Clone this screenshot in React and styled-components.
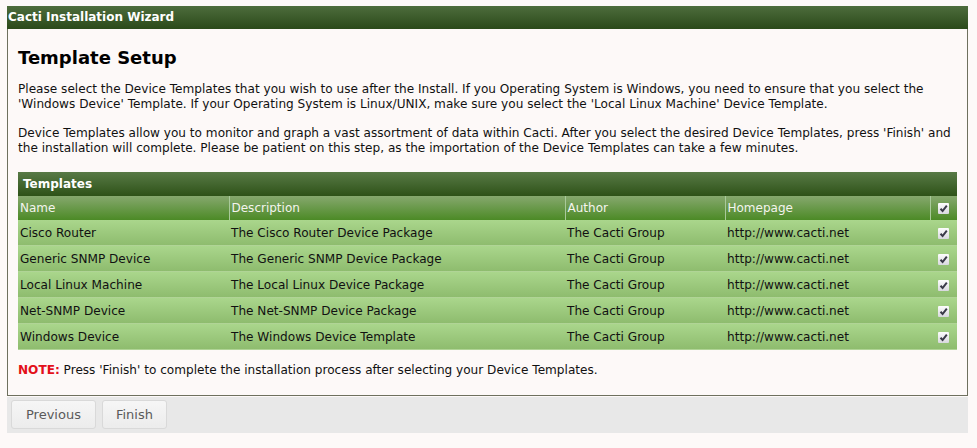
import React from "react";
import styled, { createGlobalStyle } from "styled-components";

const Global = createGlobalStyle`
  html, body { margin: 0; padding: 0; background: #fdf9f8; }
  body { font-family: "DejaVu Sans", Verdana, sans-serif; font-size: 12.1px; color: #111; }
`;

const Page = styled.div`
  padding: 6px 9px 0 7px;
  width: 961px;
`;

const Panel = styled.div`
  border: 1px solid #6e705e;
  border-top: none;
  background: #fdf9f8;
`;

const TitleBar = styled.div`
  height: 23px;
  line-height: 23px;
  margin: 0 -1px;
  padding-left: 1px;
  background: linear-gradient(#4d6c3c, #2b4a1a);
  color: #fff;
  font-weight: bold;
  font-size: 12px;
`;

const Content = styled.div`
  padding: 18px 10px 17px 10px;
`;

const Heading = styled.h2`
  margin: 0 0 13px 0;
  font-size: 18px;
  line-height: 22px;
  font-weight: bold;
  color: #000;
`;

const Para = styled.p`
  margin: 0 0 14px 0;
  line-height: 15px;
  color: #111;
`;

const Table = styled.table`
  width: 100%;
  border-collapse: collapse;
  margin-top: 16px;
`;

const CaptionRow = styled.tr`
  background: linear-gradient(#587a46, #2e5218);
  th {
    height: 24px;
    padding: 0 5px;
    color: #fff;
    font-weight: bold;
    font-size: 12px;
    text-align: left;
  }
`;

const HeadRow = styled.tr`
  background: linear-gradient(#86a86e, #4c8a26);
  th {
    height: 24px;
    padding: 0 2px;
    color: #f4f4ee;
    font-weight: normal;
    font-size: 12px;
    text-align: left;
    border-left: 1px solid #a9c99a;
  }
  th:first-child { border-left: none; }
`;

const Row = styled.tr`
  background: linear-gradient(#aad68c, #8dbb6d);
  td {
    height: 25px;
    padding: 0 2px;
    color: #111;
    border-bottom: 1px solid #b0d496;
  }
`;

const CheckCell = styled.td`
  width: 23px;
  text-align: center;
`;

const Box = styled.span`
  display: inline-block;
  vertical-align: middle;
  width: 11px;
  height: 11px;
  background: linear-gradient(#fdfdfd, #d8d8de);
  border-radius: 1px;
  svg { display: block; }
`;

const Note = styled.p`
  margin: 13px 0 0 0;
  line-height: 15px;
`;

const NoteLabel = styled.span`
  color: #e3101a;
  font-weight: bold;
`;

const ButtonBar = styled.div`
  margin-top: 1px;
  background: #e8e8e8;
  padding: 3px 4px 4px 4px;
  display: flex;
  gap: 6px;
`;

const Button = styled.button`
  height: 29px;
  padding: 0 ${(p) => p.$pad}px;
  border: 1px solid #d9d9d9;
  border-radius: 3px;
  background: linear-gradient(#f6f6f6, #ececec);
  color: #5a5a5a;
  font-family: "DejaVu Sans", Verdana, sans-serif;
  font-size: 13px;
`;

const Check = () => (
  <Box>
    <svg width="11" height="11" viewBox="0 0 11 11">
      <path d="M2.5 5.8 L4.6 8 L8.8 2.6" fill="none" stroke="#3a3a48" strokeWidth="2" />
    </svg>
  </Box>
);

const rows = [
  ["Cisco Router", "The Cisco Router Device Package"],
  ["Generic SNMP Device", "The Generic SNMP Device Package"],
  ["Local Linux Machine", "The Local Linux Device Package"],
  ["Net-SNMP Device", "The Net-SNMP Device Package"],
  ["Windows Device", "The Windows Device Template"],
];

export default function App() {
  return (
    <>
      <Global />
      <Page>
        <Panel>
          <TitleBar>Cacti Installation Wizard</TitleBar>
          <Content>
            <Heading>Template Setup</Heading>
            <Para>
              Please select the Device Templates that you wish to use after the Install. If you Operating System is Windows, you need to ensure that you select the 'Windows Device' Template. If your Operating System is Linux/UNIX, make sure you select the 'Local Linux Machine' Device Template.
            </Para>
            <Para>
              Device Templates allow you to monitor and graph a vast assortment of data within Cacti. After you select the desired Device Templates, press 'Finish' and the installation will complete. Please be patient on this step, as the importation of the Device Templates can take a few minutes.
            </Para>
            <Table>
              <colgroup>
                <col style={{ width: 211 }} />
                <col style={{ width: 336 }} />
                <col style={{ width: 160 }} />
                <col style={{ width: 205 }} />
                <col />
              </colgroup>
              <thead>
                <CaptionRow>
                  <th colSpan={5}>Templates</th>
                </CaptionRow>
                <HeadRow>
                  <th>Name</th>
                  <th>Description</th>
                  <th>Author</th>
                  <th>Homepage</th>
                  <th style={{ textAlign: "center" }}><Check /></th>
                </HeadRow>
              </thead>
              <tbody>
                {rows.map(([name, desc]) => (
                  <Row key={name}>
                    <td>{name}</td>
                    <td>{desc}</td>
                    <td>The Cacti Group</td>
                    <td>http://www.cacti.net</td>
                    <CheckCell><Check /></CheckCell>
                  </Row>
                ))}
              </tbody>
            </Table>
            <Note>
              <NoteLabel>NOTE:</NoteLabel> Press 'Finish' to complete the installation process after selecting your Device Templates.
            </Note>
          </Content>
        </Panel>
        <ButtonBar>
          <Button $pad={14}>Previous</Button>
          <Button $pad={13}>Finish</Button>
        </ButtonBar>
      </Page>
    </>
  );
}
